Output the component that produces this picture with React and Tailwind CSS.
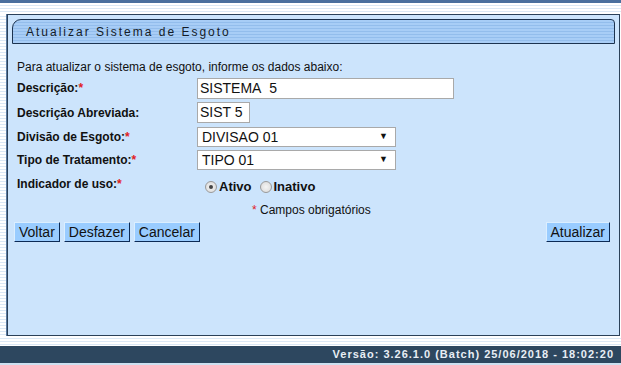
import React from "react";

const stripes = "bg-[repeating-linear-gradient(180deg,#ffffff_0px,#ffffff_2px,#dbe8f5_2px,#dbe8f5_3px)]";

function Label({ children, req }) {
    return (
        <div className="w-[180px] shrink-0 font-bold text-[12px] text-[#111]">
            {children}
            {req && <span className="text-[#e0201f]">*</span>}
        </div>
    );
}

function Btn({ children }) {
    return (
        <button className="h-[20px] px-[4px] bg-[#99ccff] text-[14px] leading-none text-[#111] border border-t-[#dbeeff] border-l-[#dbeeff] border-r-[#0c2a55] border-b-[#0c2a55]">
            {children}
        </button>
    );
}

function Select({ value }) {
    return (
        <div className="w-[199px] h-[20px] bg-white border border-[#a9a9a9] flex items-center justify-between pl-[4px] pr-[7px] text-[14px] text-[#111]">
            <span>{value}</span>
            <span className="text-[9px]">▼</span>
        </div>
    );
}

function Radio({ checked }) {
    return (
        <span className="w-[12px] h-[12px] rounded-full border border-[#9a9a9a] bg-[radial-gradient(circle,#f4f4f4,#d8d8d8)] flex items-center justify-center">
            {checked && <span className="w-[4px] h-[4px] rounded-full bg-[#444]" />}
        </span>
    );
}

export default function App() {
    return (
        <div className="w-[621px] h-[365px] flex flex-col bg-white font-['Liberation_Sans',Arial,sans-serif] overflow-hidden">
            <div className="h-[3px] bg-[#4a6f9e]" />
            <div className={"h-[11px] " + stripes} />
            <div className="flex h-[322px]">
                <div className={"w-[7px] border-r border-[#5a7aa0] " + stripes} />
                <div className="w-[613px] border border-[#2b4159] bg-[#cce4fc] flex flex-col px-[4px] pt-[4px]">
                    <div className="h-[25px] rounded-tl-[9px] rounded-tr-[4px] border border-[#1c3350] bg-[repeating-linear-gradient(180deg,#a8cdf6_0px,#a8cdf6_2px,#93bdec_2px,#93bdec_3px)] flex items-center pl-[13px] text-[12px] tracking-[2px] text-[#141c28]">
                        Atualizar Sistema de Esgoto
                    </div>
                    <div className="pl-[5px] pr-[5px] flex flex-col text-[12px] text-[#111]">
                        <div className="mt-[16px] h-[14px] leading-[14px]">Para atualizar o sistema de esgoto, informe os dados abaixo:</div>
                        <div className="mt-[3px] flex items-center h-[22px]">
                            <Label req>Descrição:</Label>
                            <div className="w-[257px] h-[21px] bg-white border border-[#a9a9a9] text-[14px] pl-[2px] flex items-center">SISTEMA&nbsp;&nbsp;5</div>
                        </div>
                        <div className="mt-[3px] flex items-center h-[21px]">
                            <Label>Descrição Abreviada:</Label>
                            <div className="w-[53px] h-[21px] bg-white border border-[#a9a9a9] text-[14px] pl-[2px] flex items-center">SIST 5</div>
                        </div>
                        <div className="mt-[4px] flex items-center h-[20px]">
                            <Label req>Divisão de Esgoto:</Label>
                            <Select value="DIVISAO 01" />
                        </div>
                        <div className="mt-[3px] flex items-center h-[20px]">
                            <Label req>Tipo de Tratamento:</Label>
                            <Select value="TIPO 01" />
                        </div>
                        <div className="mt-[5px] flex items-start h-[20px]">
                            <Label req>Indicador de uso:</Label>
                            <div className="flex items-center gap-[2px] pl-[8px] pt-[2px] font-bold text-[13px]">
                                <Radio checked />
                                <span className="mr-[6px]">Ativo</span>
                                <Radio />
                                <span>Inativo</span>
                            </div>
                        </div>
                        <div className="mt-[8px] pl-[235px] h-[14px] leading-[14px]">
                            <span className="text-[#e0201f]">*</span> Campos obrigatórios
                        </div>
                        <div className="mt-[5px] flex items-center justify-between -ml-[3px]">
                            <div className="flex gap-[4px]">
                                <Btn>Voltar</Btn>
                                <Btn>Desfazer</Btn>
                                <Btn>Cancelar</Btn>
                            </div>
                            <Btn>Atualizar</Btn>
                        </div>
                    </div>
                </div>
                <div className="w-[1px] bg-white" />
            </div>
            <div className={"h-[10px] " + stripes} />
            <div className="h-[17px] bg-[#2d475f] flex items-center justify-end pr-[7px] text-[11px] font-bold tracking-[1px] text-[#e8eef5]">
                Versão: 3.26.1.0 (Batch) 25/06/2018 - 18:02:20
            </div>
            <div className="flex-1 bg-[#cde0f0]" />
        </div>
    );
}
